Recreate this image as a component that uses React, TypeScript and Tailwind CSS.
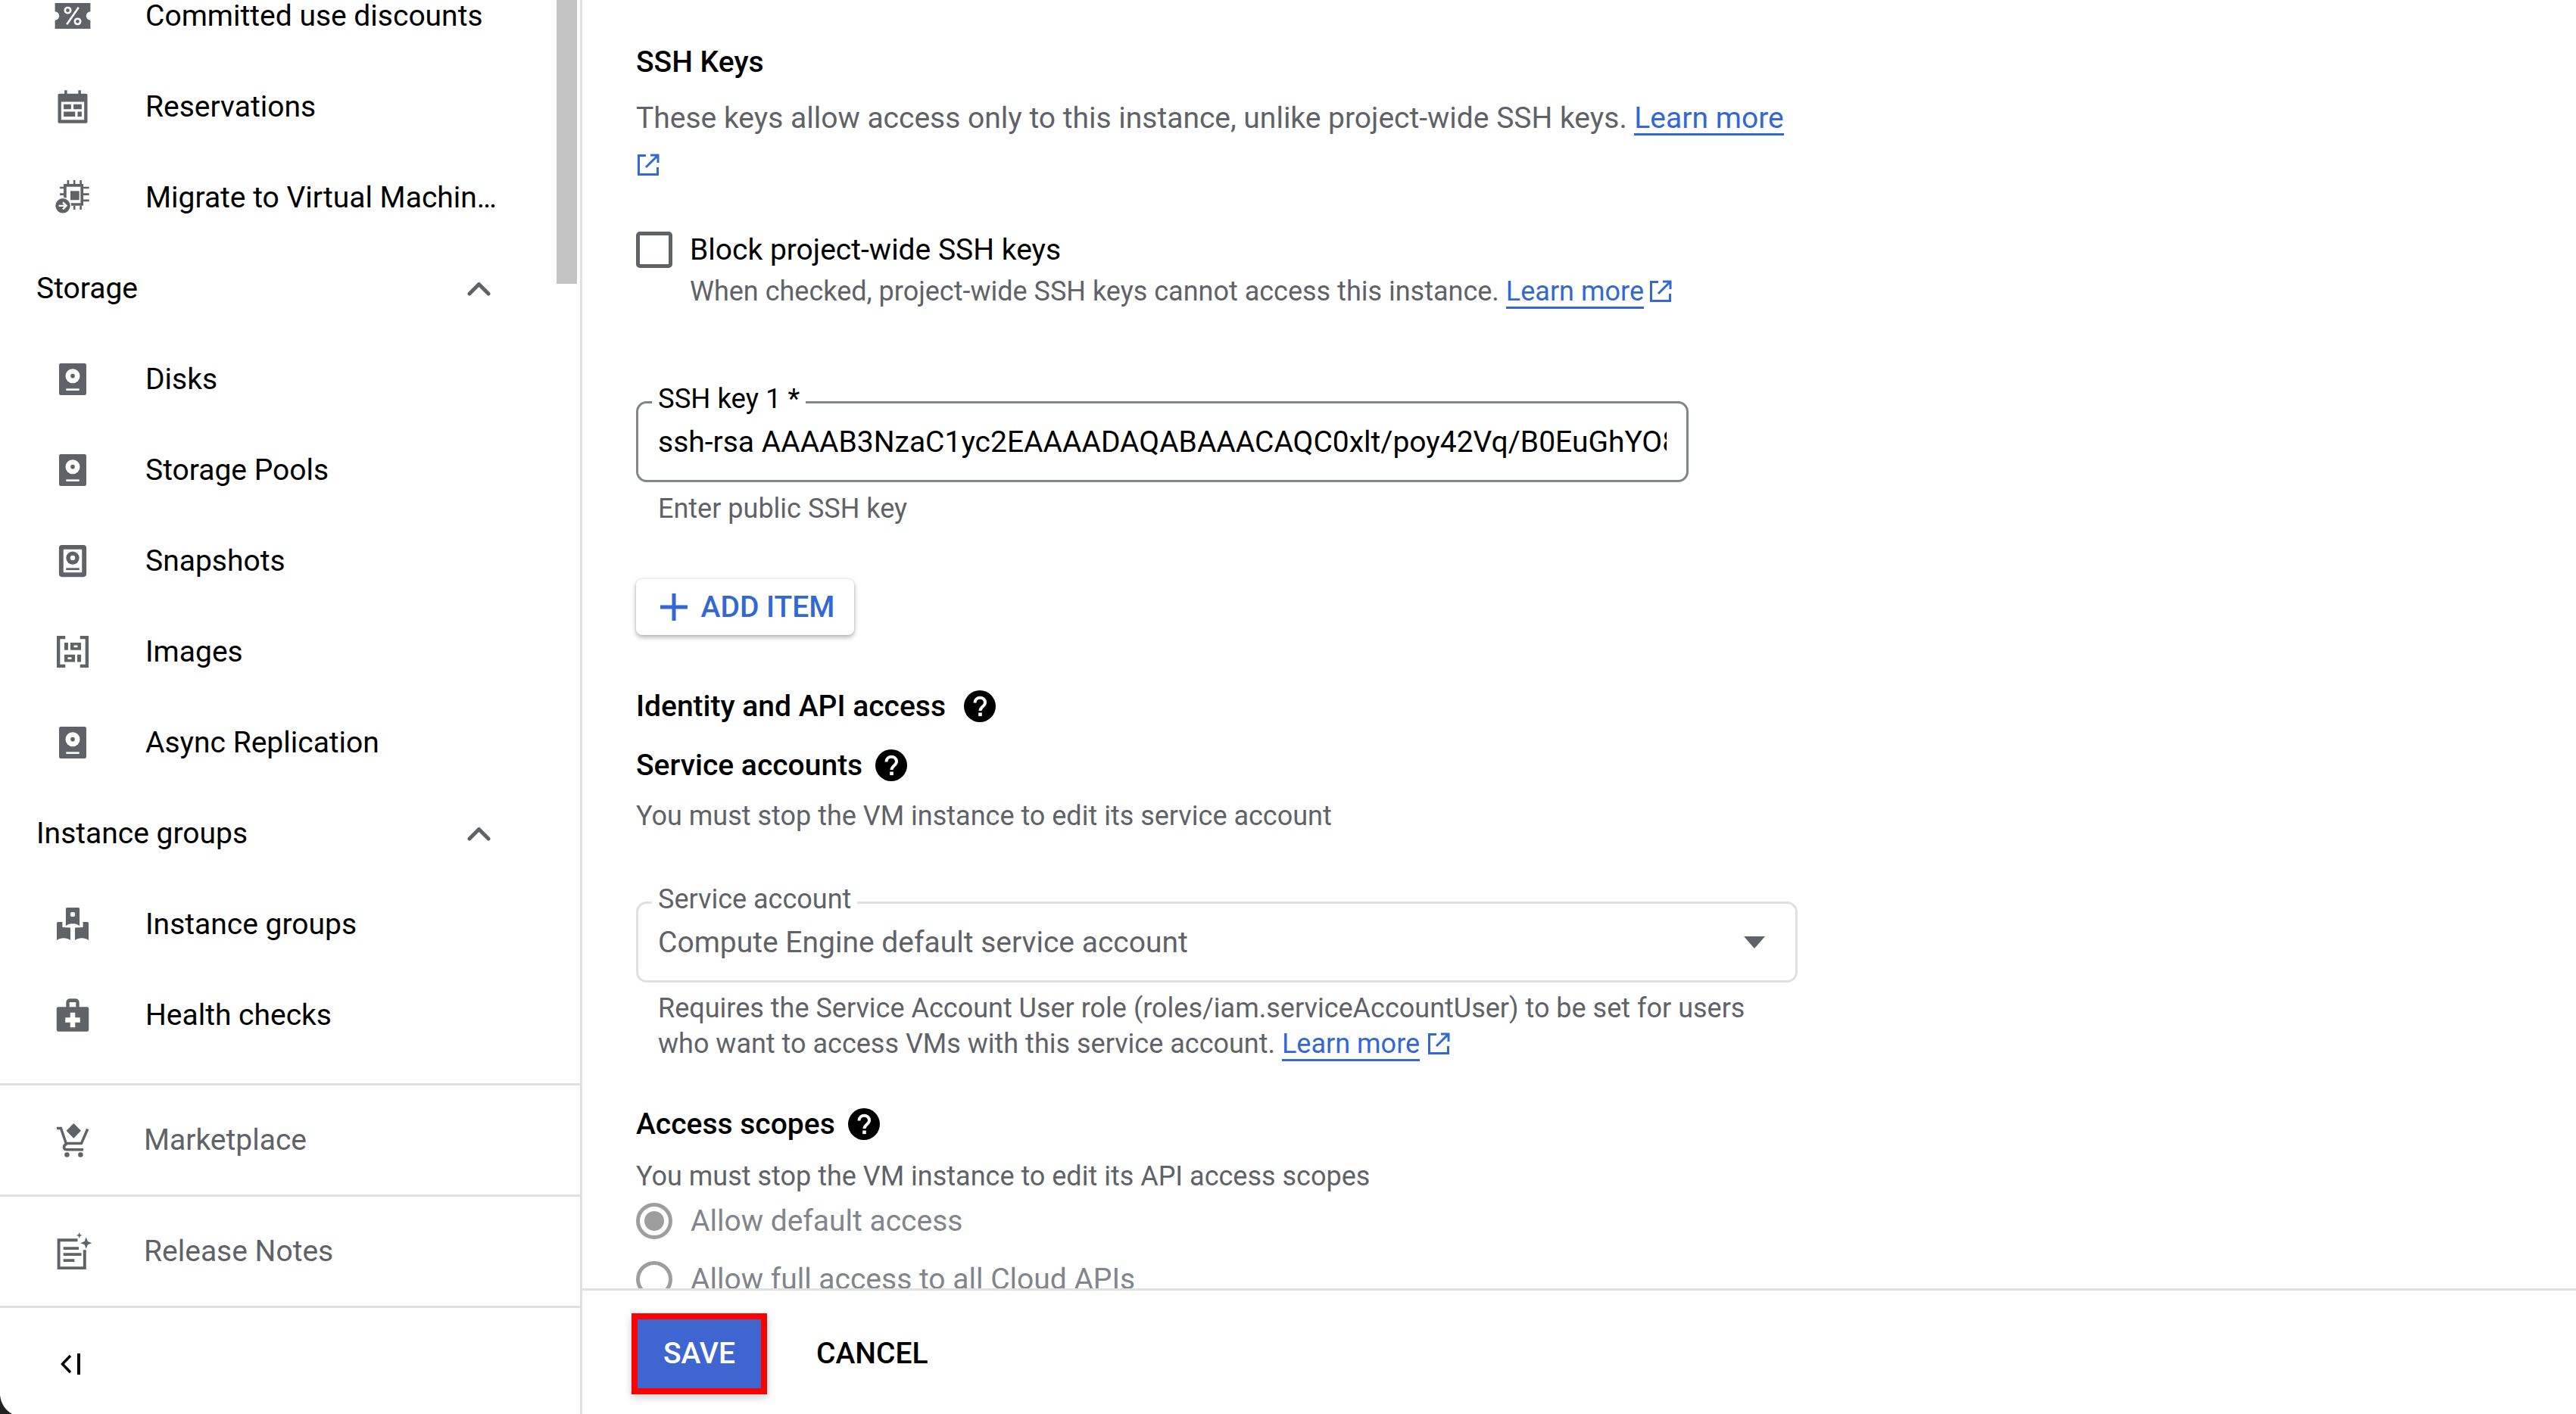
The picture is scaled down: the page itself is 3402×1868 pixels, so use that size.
import React from 'react';

function Svg({ children, className = 'w-[52px] h-[52px]' }: { children: React.ReactNode; className?: string }) {
  return (
    <svg viewBox="0 0 24 24" className={`${className} shrink-0`}>
      {children}
    </svg>
  );
}

const G = '#5f6368';

const DiscountIcon = () => (
  <Svg>
    <path fill={G} d="M1.2 4.2h21.6v5.2a2.6 2.6 0 0 0 0 5.2v5.2H1.2v-5.2a2.6 2.6 0 0 0 0-5.2z" />
    <circle cx="9" cy="8.6" r="1.7" fill="none" stroke="#fff" strokeWidth="1.2" />
    <circle cx="15" cy="15.4" r="1.7" fill="none" stroke="#fff" strokeWidth="1.2" />
    <path d="M15.6 6.8 8.4 17.2" stroke="#fff" strokeWidth="1.2" />
  </Svg>
);

const CalendarIcon = () => (
  <Svg>
    <path fill={G} d="M7 2h1.6v2h6.8V2H17v2h3.2a.8.8 0 0 1 .8.8v16.4a.8.8 0 0 1-.8.8H3.8a.8.8 0 0 1-.8-.8V4.8a.8.8 0 0 1 .8-.8H7z" />
    <path fill="#fff" d="M5 9h14v11H5z" />
    <path fill={G} d="M6.5 10.5H11v3H6.500zM12.500 10.500h5v3h-5zM6.500 15h7v3h-7zM15 15h2.500v3H15z" />
  </Svg>
);

const MigrateIcon = () => (
  <Svg>
    <path fill={G} d="M8.600 1.400h1.200v2.400H8.600zM12.400 1.400h1.200v2.400h-1.200zM16.300 1.400h1.200v2.400h-1.200zM18.500 5.400H22v1.200h-3.500zM18.500 9.400H22v1.200h-3.500zM18.500 13.200H22v1.200h-3.500zM4.200 5.400h2.300v1.200H4.200zM4.200 9.400h2.300v1.200H4.200zM12.400 17h1.200v2.400h-1.200zM16.300 17h1.200v2.400h-1.200z" />
    <path fill={G} fillRule="evenodd" d="M6.500 3.700h12V17h-12zM8.200 5.400v9.900h8.600V5.400z" />
    <path fill={G} d="M10.600 8h5.400v5.500h-5.400z" />
    <circle cx="6" cy="17" r="4.800" fill={G} stroke="#fff" strokeWidth="0.6" />
    <path d="M3.500 17h4.600M6 14.900 8.100 17 6 19.100" fill="none" stroke="#fff" strokeWidth="1.100" />
  </Svg>
);

const DiskIcon = () => (
  <Svg>
    <rect x="3.700" y="2.300" width="16.600" height="19.400" rx="1" fill={G} />
    <circle cx="12" cy="10" r="4.400" fill="#fff" />
    <circle cx="12" cy="10" r="1.300" fill={G} />
    <path fill="#fff" d="M8 17.700h8v1.200H8z" />
  </Svg>
);

const SnapshotIcon = () => (
  <Svg>
    <rect x="5" y="3.600" width="14" height="16.800" rx="0.400" fill="#fff" stroke={G} strokeWidth="2.700" />
    <circle cx="12" cy="10.200" r="4" fill={G} />
    <circle cx="12" cy="10.200" r="1.500" fill="#fff" />
    <path fill={G} d="M8 16.300h8v1.300H8z" />
  </Svg>
);

const ImagesIcon = () => (
  <Svg>
    <path fill={G} d="M2.300 2.300h5.200v2H4.300v15.400h3.200v2H2.300zM21.700 2.300h-5.200v2h3.200v15.400h-3.200v2h5.200z" />
    <path fill={G} d="M6.900 6.500h2.300V11H6.900zM10.600 6.500h6.500V11h-6.500zM6.900 13.700h6.500v4.500H6.900zM14.800 13.700h2.300v4.500h-2.300z" />
    <path fill="#fff" d="M12.700 8.100h2.300v1.300h-2.300zM9 15.300h2.300v1.300H9z" />
  </Svg>
);

const GroupsIcon = () => (
  <Svg>
    <path fill={G} d="M7.800 2.600a.8.8 0 0 1 .8-.8h6.800a.8.8 0 0 1 .8.8V13c-1.500-1.200-2.800-1.400-4.200-1.400S9.300 11.800 7.800 13z" />
    <circle cx="12" cy="6" r="1.500" fill="#fff" />
    <path fill={G} d="M2.300 11.400a.8.800 0 0 1 .8-.8h2.600v3.200l4.900.3v7.600c-2.400-1.700-5.900-1.700-8.300 0z" />
    <path fill={G} d="M21.700 11.400a.8.800 0 0 0-.8-.8h-2.600v3.200l-4.900.3v7.600c2.400-1.700 5.900-1.700 8.300 0z" />
  </Svg>
);

const HealthIcon = () => (
  <Svg>
    <path fill={G} d="M8 7V4.300a2.300 2.300 0 0 1 2.300-2.300h3.400A2.300 2.300 0 0 1 16 4.300V7h4.800a1 1 0 0 1 1 1v13a1 1 0 0 1-1 1H3.200a1 1 0 0 1-1-1V8a1 1 0 0 1 1-1zm2-2.800V7h4V4.200z" />
    <path fill="#fff" d="M10.500 10.500h3v3h3v3h-3v3h-3v-3h-3v-3h3z" />
  </Svg>
);

const CartIcon = () => (
  <Svg>
    <path fill={G} d="m12.600 1.800 4.500 4.600-4.500 4.600-4.500-4.600z" />
    <path d="M2.300 4.800h2.500l3.200 9.300h9.300l3.800-8.800" fill="none" stroke={G} strokeWidth="1.600" />
    <path d="M8.500 14.400c-2.400.5-2.400 3.500 0 3.500h10" fill="none" stroke={G} strokeWidth="1.600" />
    <circle cx="8.500" cy="21" r="1.500" fill={G} />
    <circle cx="16.800" cy="21" r="1.500" fill={G} />
  </Svg>
);

const NotesIcon = () => (
  <Svg>
    <path d="M15 5.200H3.500v17h15.800v-11" fill="none" stroke={G} strokeWidth="1.800" />
    <path fill={G} d="M6.300 9.300h9.400v1.800H6.300zM6.300 13h11v1.800h-11zM6.300 16.700h6.800v1.800H6.300z" />
    <path fill={G} d="m20.200 3.500 1 2.500 2.500 1-2.500 1-1 2.500-1-2.500-2.500-1 2.500-1zM16 .5l.5 1.300 1.300.5-1.300.5-.5 1.300-.5-1.300-1.300-.5 1.300-.5z" />
  </Svg>
);

const ChevronUp = () => (
  <svg viewBox="0 0 31 19" className="w-[31px] h-[19px]">
    <path d="M3 16 15.500 3.500 28 16" fill="none" stroke={G} strokeWidth="5" strokeLinecap="round" strokeLinejoin="round" />
  </svg>
);

const ExternalIcon = ({ className = 'w-[32px] h-[32px]' }: { className?: string }) => (
  <svg viewBox="0 0 32 32" className={`${className} inline-block shrink-0`}>
    <path d="M13 3.500H3.500v25h25V19M19 3h10v10M29 3 13 19" fill="none" stroke="#3367d6" strokeWidth="3" />
  </svg>
);

const HelpIcon = () => (
  <svg viewBox="0 0 42 42" className="w-[42px] h-[42px] shrink-0">
    <circle cx="21" cy="21" r="21" fill="#000" />
    <path d="M14.500 16.500c0-9 13.500-9 13.500-.5 0 5.500-6.500 5.500-6.500 11" fill="none" stroke="#fff" strokeWidth="4" />
    <rect x="19.200" y="29.500" width="4.600" height="4.600" fill="#fff" />
  </svg>
);

type NavItem = { label: string; icon: () => React.ReactElement };

const NavRow = ({ item }: { item: NavItem }) => (
  <div className="h-[120px] flex items-center pl-[70px] gap-[70px] shrink-0">
    <item.icon />
    <span className="w-[470px] truncate text-[39px] text-[#000]">{item.label}</span>
  </div>
);

const GroupRow = ({ label }: { label: string }) => (
  <div className="h-[120px] flex items-center justify-between pl-[48px] pr-[118px] shrink-0">
    <span className="text-[39px] text-[#000]">{label}</span>
    <ChevronUp />
  </div>
);

const FooterRow = ({ item }: { item: NavItem }) => (
  <div className="h-[147px] flex items-center pl-[70px] gap-[68px] border-t-[3px] border-[#e0e0e0] shrink-0">
    <item.icon />
    <span className="text-[39px] text-[#5f6368]">{item.label}</span>
  </div>
);

function Sidebar() {
  return (
    <aside className="relative w-[769px] h-full shrink-0 flex flex-col border-r-[3px] border-[#e0e0e0] overflow-hidden">
      <div className="-mt-[39px] flex flex-col">
        <NavRow item={{ label: 'Committed use discounts', icon: DiscountIcon }} />
        <NavRow item={{ label: 'Reservations', icon: CalendarIcon }} />
        <NavRow item={{ label: 'Migrate to Virtual Machines', icon: MigrateIcon }} />
        <GroupRow label="Storage" />
        <NavRow item={{ label: 'Disks', icon: DiskIcon }} />
        <NavRow item={{ label: 'Storage Pools', icon: DiskIcon }} />
        <NavRow item={{ label: 'Snapshots', icon: SnapshotIcon }} />
        <NavRow item={{ label: 'Images', icon: ImagesIcon }} />
        <NavRow item={{ label: 'Async Replication', icon: DiskIcon }} />
        <GroupRow label="Instance groups" />
        <NavRow item={{ label: 'Instance groups', icon: GroupsIcon }} />
        <NavRow item={{ label: 'Health checks', icon: HealthIcon }} />
      </div>
      <div className="mt-[30px] flex flex-col">
        <FooterRow item={{ label: 'Marketplace', icon: CartIcon }} />
        <FooterRow item={{ label: 'Release Notes', icon: NotesIcon }} />
        <div className="flex items-center pl-[79px] h-[150px] shrink-0 border-t-[3px] border-[#e0e0e0]">
          <svg viewBox="0 0 28 28" className="w-[28px] h-[28px]">
            <path d="M14 3 3.500 14 14 25" fill="none" stroke="#000" strokeWidth="3.500" />
            <path d="M25 0v28" stroke="#000" strokeWidth="4" />
          </svg>
        </div>
      </div>
      {/* scrollbar thumb and window corner sit over the nav */}
      <div className="absolute top-0 left-[735px] w-[27px] h-[375px] bg-[#c4c4c4]" />
      <div className="absolute left-0 bottom-0 w-[16px] h-[25px] bg-[#222] [clip-path:path('M0_0Q2_17_16_25L0_25Z')]" />
    </aside>
  );
}

function Link({ children }: { children: React.ReactNode }) {
  return <span className="text-[#3367d6] border-b-[3px] border-[#3367d6] leading-[40px] inline-block">{children}</span>;
}

function Content() {
  return (
    <div className="flex-1 min-h-0 overflow-hidden pl-[71px] pt-[60px]">
      <h3 className="text-[39px] font-medium text-[#000] leading-[44px]">SSH Keys</h3>

      <p className="mt-[22px] w-[1540px] text-[39px] leading-[60px] text-[#5f6368]">
        These keys allow access only to this instance, unlike project-wide SSH keys. <Link>Learn more</Link>
        <span className="block h-[60px] -mt-[1px]">
          <ExternalIcon />
        </span>
      </p>

      <div className="mt-[61px] flex gap-[23px]">
        <div className="w-[48px] h-[48px] border-[5px] border-[#5f6368] rounded-[5px] shrink-0" />
        <div>
          <div className="text-[39px] leading-[48px] text-[#000]">Block project-wide SSH keys</div>
          <div className="mt-[7px] flex items-center gap-[6px] text-[36px] leading-[48px] text-[#5f6368]">
            <span>When checked, project-wide SSH keys cannot access this instance.</span>
            <span className="ml-[3px]"><Link>Learn more</Link></span>
            <ExternalIcon />
          </div>
        </div>
      </div>

      <div className="relative mt-[121px] w-[1390px] h-[107px] border-[3px] border-[#80868b] rounded-[14px] flex items-center pl-[26px] pr-[26px]">
        <span className="absolute -top-[28px] left-[18px] bg-white px-[8px] text-[36.500px] leading-[44px] text-[#000]">SSH key 1 *</span>
        <div className="overflow-hidden whitespace-nowrap text-[39px] text-[#000] mt-[2px]">
          ssh-rsa AAAAB3NzaC1yc2EAAAADAQABAAACAQC0xlt/poy42Vq/B0EuGhYO8xZqW3k
        </div>
      </div>
      <div className="mt-[13px] pl-[29px] text-[36px] leading-[44px] text-[#5f6368]">Enter public SSH key</div>

      <button className="mt-[71px] h-[74px] w-[288px] rounded-[8px] bg-white flex items-center justify-center gap-[16px] pl-[4px] shadow-[0_3px_6px_rgba(0,0,0,0.3),0_0_3px_rgba(0,0,0,0.12)] text-[39px] font-medium text-[#3367d6]">
        <svg viewBox="0 0 40 40" className="w-[40px] h-[40px]">
          <path d="M20 2v36M2 20h36" stroke="#3367d6" strokeWidth="5" />
        </svg>
        ADD ITEM
      </button>

      <div className="mt-[72px] flex items-center gap-[24px] h-[44px]">
        <span className="text-[39px] font-medium text-[#000]">Identity and API access</span>
        <HelpIcon />
      </div>
      <div className="mt-[34px] flex items-center gap-[17px] h-[44px]">
        <span className="text-[39px] font-medium text-[#000]">Service accounts</span>
        <HelpIcon />
      </div>
      <p className="mt-[21px] text-[36px] leading-[48px] text-[#5f6368]">You must stop the VM instance to edit its service account</p>

      <div className="relative mt-[89px] w-[1534px] h-[107px] border-[3px] border-[#e0e0e0] rounded-[14px] flex items-center justify-between pl-[26px] pr-[40px]">
        <span className="absolute -top-[28px] left-[18px] bg-white px-[8px] text-[36px] leading-[44px] text-[#5f6368]">Service account</span>
        <span className="text-[39px] text-[#5f6368] mt-[2px]">Compute Engine default service account</span>
        <svg viewBox="0 0 28 16" className="w-[28px] h-[16px]">
          <path d="M0 0h28L14 16z" fill="#5f6368" />
        </svg>
      </div>
      <p className="mt-[11px] pl-[29px] w-[1534px] text-[36px] leading-[47px] text-[#5f6368]">
        Requires the Service Account User role (roles/iam.serviceAccountUser) to be set for users
        <br />
        who want to access VMs with this service account. <Link>Learn more</Link>{' '}
        <ExternalIcon className="w-[32px] h-[32px] align-[-4px]" />
      </p>

      <div className="mt-[60px] flex items-center gap-[17px] h-[44px]">
        <span className="text-[39px] font-medium text-[#000]">Access scopes</span>
        <HelpIcon />
      </div>
      <p className="mt-[23px] text-[36px] leading-[48px] text-[#5f6368]">You must stop the VM instance to edit its API access scopes</p>

      <div className="mt-[5px] flex items-center gap-[24px] h-[60px]">
        <div className="w-[48px] h-[48px] rounded-full border-[5px] border-[#9e9e9e] flex items-center justify-center">
          <div className="w-[26px] h-[26px] rounded-full bg-[#9e9e9e]" />
        </div>
        <span className="text-[39px] text-[#80868b]">Allow default access</span>
      </div>
      <div className="mt-[17px] flex items-center gap-[24px] h-[60px]">
        <div className="w-[48px] h-[48px] rounded-full border-[5px] border-[#9e9e9e]" />
        <span className="text-[39px] text-[#80868b]">Allow full access to all Cloud APIs</span>
      </div>
    </div>
  );
}

function Footer() {
  return (
    <div className="h-[166px] shrink-0 border-t-[3px] border-[#e0e0e0] flex items-center pl-[65px] gap-[65px] pt-[4px]">
      <div className="border-[8px] border-[#ff0000] shadow-[0_4px_10px_rgba(0,0,0,0.2)]">
        <button className="w-[163px] h-[91px] bg-[#3f66d0] text-white text-[39px] font-medium">SAVE</button>
      </div>
      <button className="text-[39px] font-medium text-[#000]">CANCEL</button>
    </div>
  );
}

export default function App() {
  return (
    <div className="font-[Roboto,sans-serif] w-[3402px] h-[1868px] flex overflow-hidden bg-white">
      <Sidebar />
      <main className="flex-1 min-w-0 h-full flex flex-col">
        <Content />
        <Footer />
      </main>
    </div>
  );
}
